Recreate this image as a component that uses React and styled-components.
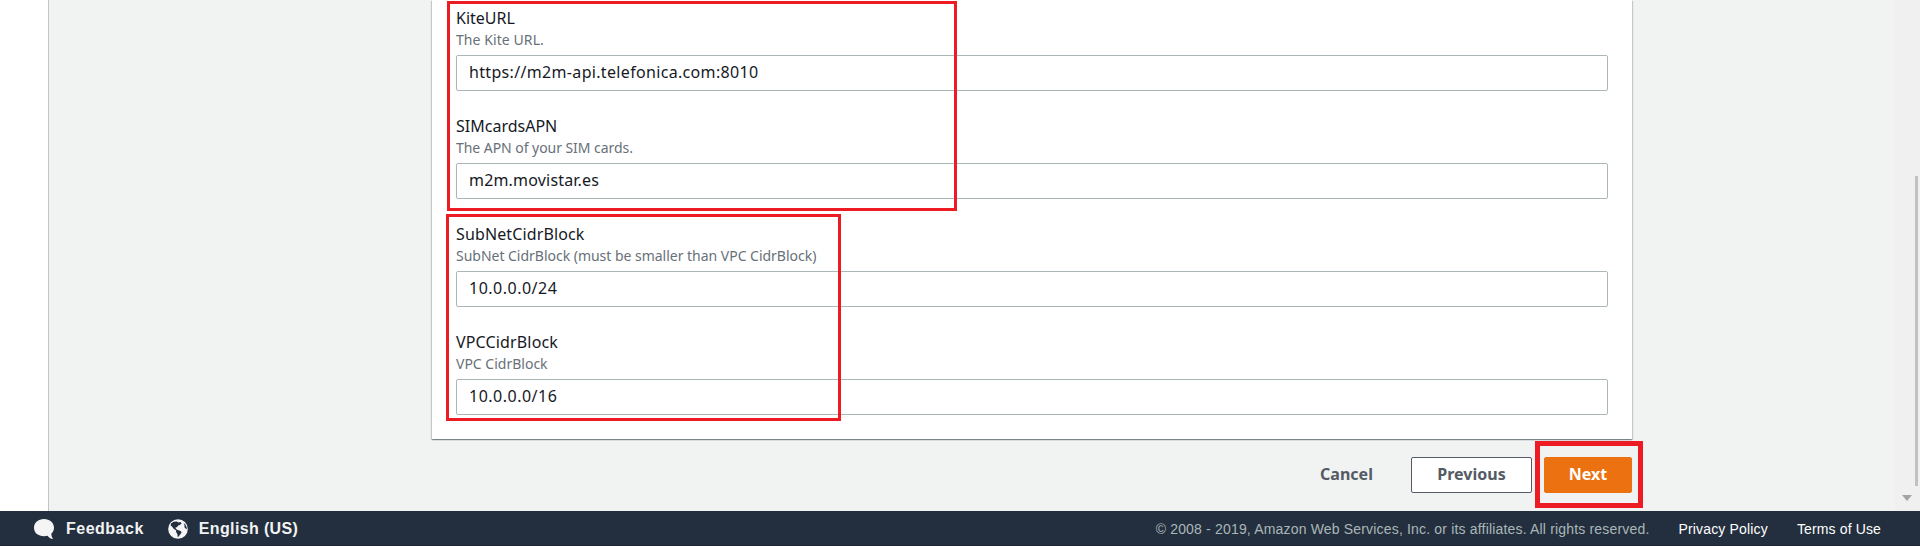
import React from "react";
import styled, { createGlobalStyle } from "styled-components";

const GlobalStyle = createGlobalStyle`
  * { box-sizing: border-box; }
  body { margin: 0; font-family: "Noto Sans", "Open Sans", sans-serif; color: #16191f; overflow: hidden; }
`;

const Page = styled.div`
  position: relative;
  display: flex;
  flex-direction: column;
  width: 1920px;
  height: 546px;
  overflow: hidden;
`;

const Body = styled.div`
  display: flex;
  height: 511px;
`;

const SideRail = styled.aside`
  width: 49px;
  background: #fff;
  border-right: 1px solid #bec5c9;
`;

const Main = styled.main`
  flex: 1;
  display: flex;
  flex-direction: column;
  padding-left: 383px;
  background: #f1f3f3;
`;

const Card = styled.section`
  display: flex;
  flex-direction: column;
  gap: 24px;
  width: 1200px;
  height: 439px;
  padding: 7px 24px 24px;
  background: #fff;
  box-shadow: 0 1px 1px 0 rgba(0, 28, 36, 0.3), 1px 1px 1px 0 rgba(0, 28, 36, 0.15),
    -1px 1px 1px 0 rgba(0, 28, 36, 0.15);
`;

const Field = styled.div`
  display: flex;
  flex-direction: column;
`;

const Tracked = styled.span`
  white-space: nowrap;
  letter-spacing: ${(p) => p.$track || 0}px;
`;

const Label = styled(Tracked)`
  font-size: 16px;
  line-height: 22px;
`;

const Hint = styled(Tracked)`
  margin-bottom: 4px;
  font-size: 14px;
  line-height: 22px;
  color: #687078;
`;

const InputBox = styled.div`
  display: flex;
  align-items: center;
  height: 36px;
  padding: 0 12px 2px;
  font-size: 16px;
  background: #fff;
  border: 1px solid #aab7b8;
  border-radius: 2px;
`;

const Actions = styled.div`
  display: flex;
  justify-content: flex-end;
  width: 1200px;
  margin-top: 18px;
`;

const Button = styled.button`
  width: ${(p) => p.$width}px;
  height: 36px;
  padding: 0 0 2px;
  margin-left: ${(p) => p.$gap || 0}px;
  font: 700 16px "Noto Sans", sans-serif;
  color: ${(p) => (p.$kind === "primary" ? "#fff" : "#545b64")};
  background: ${(p) => ({ primary: "#ec7211", normal: "#fff", link: "transparent" })[p.$kind]};
  border: 1px solid ${(p) => ({ primary: "#ec7211", normal: "#545b64", link: "transparent" })[p.$kind]};
  border-radius: 2px;
`;

const ScrollTrack = styled.div`
  display: flex;
  flex-direction: column;
  width: 25px;
  padding-top: 176px;
  background: #f0f0f0;
`;

const ScrollThumb = styled.div`
  width: 3px;
  height: 310px;
  margin-left: 20px;
  background: #c1c1c1;
`;

const ScrollArrow = styled.div`
  width: 0;
  margin: 9px 0 0 7px;
  border: 5.5px solid transparent;
  border-top: 6px solid #a3a3a3;
  border-bottom: 0;
`;

const Footer = styled.footer`
  display: flex;
  align-items: center;
  height: 35px;
  padding: 1px 39px 0 34px;
  font-family: "Liberation Sans", Arial, sans-serif;
  background: #232f3e;
  border-bottom: 1px solid #1b2533;
`;

const FooterAction = styled.div`
  display: flex;
  align-items: center;
  gap: ${(p) => p.$gap}px;
  margin-right: 24px;
  font-size: 16px;
  font-weight: 700;
  color: #f2f3f3;
`;

const Legal = styled.div`
  display: flex;
  gap: 29px;
  margin-left: auto;
  font-size: 14px;
  color: #fff;
`;

const Copyright = styled(Tracked)`
  color: #aab7b8;
`;

const Outline = styled.div`
  position: absolute;
  left: ${(p) => p.$x}px;
  top: ${(p) => p.$y}px;
  width: ${(p) => p.$w}px;
  height: ${(p) => p.$h}px;
  border: ${(p) => p.$line}px solid #ed1c24;
  pointer-events: none;
`;

const fields = [
  { label: "KiteURL", hint: "The Kite URL.", value: "https://m2m-api.telefonica.com:8010", hintTrack: 0.08, valueTrack: 0.33 },
  { label: "SIMcardsAPN", hint: "The APN of your SIM cards.", value: "m2m.movistar.es", hintTrack: -0.05, valueTrack: 0.18 },
  {
    label: "SubNetCidrBlock",
    hint: "SubNet CidrBlock (must be smaller than VPC CidrBlock)",
    value: "10.0.0.0/24",
    labelTrack: 0.13,
    hintTrack: -0.02,
    valueTrack: 0.5,
  },
  { label: "VPCCidrBlock", hint: "VPC CidrBlock", value: "10.0.0.0/16", labelTrack: 0.15, valueTrack: 0.5 },
];

const BubbleIcon = () => (
  <svg width="20" height="20" viewBox="0 0 20 20">
    <path
      d="M10 0C4.200 0 0 3.600 0 8.800C0 14 4.200 17.200 10 17.200C11.300 17.200 12.500 17 13.600 16.700C14.800 18.300 16.600 19.700 19 20C18 18.500 17.400 16.600 17.300 14.700C19 13.200 20 11.200 20 8.800C20 3.600 15.800 0 10 0Z"
      fill="#f5f5f5"
    />
  </svg>
);

const GlobeIcon = () => (
  <svg width="20" height="20" viewBox="0 0 20 20">
    <circle cx="10" cy="10" r="9.800" fill="#f5f5f5" />
    <path
      d="M3 4.500L5.500 2.800L9 2.600L10.500 3.600L12.600 3L13.600 4.600L11.800 6L10.200 6.600L9 8.300L7.600 8.200L7.800 9.800L9.600 11L12.600 12L13.600 13.400L12.200 15.600L10.600 17.400L9.800 18.200L9.400 15.200L8 12.800L8.200 11.600L5.600 9.800L4 7.400L2.600 6.400Z"
      fill="#232f3e"
    />
    <path d="M15.600 4L17.200 5.200L18.600 8L18.800 10.400L17.600 9.600L16.400 8.200L16.600 6.400Z" fill="#232f3e" />
  </svg>
);

export default function App() {
  return (
    <Page>
      <GlobalStyle />
      <Body>
        <SideRail />
        <Main>
          <Card>
            {fields.map((f) => (
              <Field key={f.label}>
                <Label $track={f.labelTrack}>{f.label}</Label>
                <Hint $track={f.hintTrack}>{f.hint}</Hint>
                <InputBox>
                  <Tracked $track={f.valueTrack}>{f.value}</Tracked>
                </InputBox>
              </Field>
            ))}
          </Card>
          <Actions>
            <Button $kind="link" $width={105}><Tracked>Cancel</Tracked></Button>
            <Button $kind="normal" $width={121} $gap={12}><Tracked>Previous</Tracked></Button>
            <Button $kind="primary" $width={88} $gap={12}><Tracked>Next</Tracked></Button>
          </Actions>
        </Main>
        <ScrollTrack>
          <ScrollThumb />
          <ScrollArrow />
        </ScrollTrack>
      </Body>
      <Footer>
        <FooterAction $gap={12}>
          <BubbleIcon />
          <Tracked $track={0.5}>Feedback</Tracked>
        </FooterAction>
        <FooterAction $gap={11}>
          <GlobeIcon />
          <Tracked $track={0.36}>English (US)</Tracked>
        </FooterAction>
        <Legal>
          <Copyright $track={0.175}>© 2008 - 2019, Amazon Web Services, Inc. or its affiliates. All rights reserved.</Copyright>
          <Tracked $track={0.17}>Privacy Policy</Tracked>
          <Tracked $track={0.13}>Terms of Use</Tracked>
        </Legal>
      </Footer>
      <Outline $x={447} $y={1} $w={510} $h={210} $line={3} />
      <Outline $x={446} $y={214} $w={395} $h={207} $line={3} />
      <Outline $x={1535} $y={441} $w={108} $h={67} $line={5} />
    </Page>
  );
}
